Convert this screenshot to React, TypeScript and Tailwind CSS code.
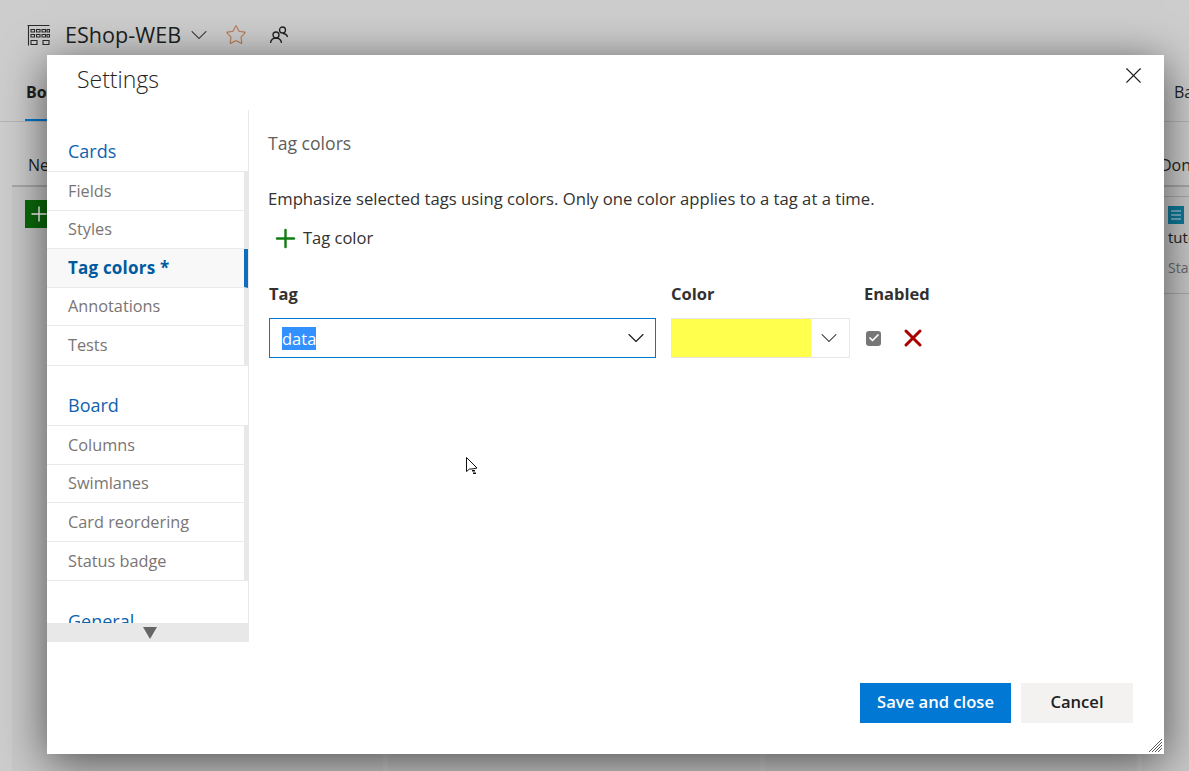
import React from "react";
import { Check, ChevronDown, Plus, Star, X } from "lucide-react";

const CARD_ITEMS = ["Fields", "Styles", "Tag colors *", "Annotations", "Tests"];
const BOARD_ITEMS = ["Columns", "Swimlanes", "Card reordering", "Status badge"];

const FONT = "font-['Open_Sans','Noto_Sans',sans-serif]";

const BoardIcon = () => (
  <svg width="24" height="24" viewBox="0 0 24 24" fill="none" stroke="#2b2b2b" strokeWidth="1.1">
    <path d="M1.500 2.500h22M2.500 2.500v20" />
    <path d="M5 6.500h3.500v2.500H5zM10.500 6.500H14v2.500h-3.500zM16 6.500h3.500v2.500H16zM21 6.500h2.500v2.500H21z" />
    <path d="M5 11.500h3.500V14H5zM10.500 11.500H14V14h-3.500zM16 11.500h3.500V14H16zM21 11.500h2.500V14H21z" />
    <path d="M5 17.500h6v4H5zM17 17.500h6v4h-6z" />
  </svg>
);

const TeamIcon = () => (
  <svg width="20" height="20" viewBox="0 0 20 20" fill="none" stroke="#1f1f1f" strokeWidth="1.3">
    <circle cx="7" cy="10" r="3" />
    <circle cx="13.500" cy="5" r="3" />
    <path d="M1.500 18c.5-3 2.500-5 5.500-5s5 2 5.500 5M14 8.500c2.500.2 4 1.500 4.500 3.500" />
  </svg>
);

const WorkItemIcon = () => (
  <svg width="16" height="18" viewBox="0 0 16 18" className="block">
    <rect width="16" height="18" fill="#0f7a9a" />
    <path d="M3 5h10M3 9h10M3 13h10" stroke="#cfe3ea" strokeWidth="1" />
  </svg>
);

const Cursor = () => (
  <svg width="12" height="18" viewBox="0 0 12 18" className="absolute left-[466px] top-[457px]">
    <path d="M.5.5v14l3-2.500 2.500 0 5-1z" fill="#fff" stroke="#111" strokeWidth="1" />
    <path d="M6 13h3v1.500H6zM7 15.500h3V17H7z" fill="#111" />
  </svg>
);

const ResizeGrip = () => (
  <svg width="13" height="13" viewBox="0 0 13 13" className="absolute bottom-[2px] right-[2px]" stroke="#444" strokeWidth="0.9">
    <path d="M0 13 13 0M3 13 13 3M6 13l7-7M9 13l4-4" />
  </svg>
);

const NavGroup = ({ title, items, active, pad }: { title: string; items: string[]; active?: string; pad: string }) => (
  <div>
    <div className={`${pad} pl-[21px] text-[18px] leading-[24px] text-[#0f62ae]`}>{title}</div>
    <ul className="border-y border-[#eaeaea]">
      {items.map((item) => {
        const isActive = item === active;
        return (
          <li
            key={item}
            className={`flex h-[38.6px] items-center border-r-4 border-b border-b-[#eaeaea] pl-[21px] last:border-b-0 ${
              isActive
                ? "border-r-[#106ebe] bg-[#f8f8f8] text-[17px] font-bold tracking-[0.2px] text-[#005a9e]"
                : "border-r-[#e8e8e8] text-[16.3px] text-[#7a7574]"
            }`}
          >
            {item}
          </li>
        );
      })}
    </ul>
  </div>
);

export default function App() {
  return (
    <div className={`relative h-screen w-full overflow-hidden bg-[#cdcdcd] ${FONT} text-[#201f1e]`}>
      {/* Page behind the dialog */}
      <div className="flex h-[70px] items-center pl-[26px]">
        <BoardIcon />
        <span className="ml-[15px] text-[21.6px]">EShop-WEB</span>
        <ChevronDown size={28} strokeWidth={0.9} className="ml-[4px]" />
        <Star size={22} strokeWidth={1.2} className="ml-[12px] text-[#b87a50]" />
        <span className="ml-[22px]">
          <TeamIcon />
        </span>
      </div>
      <div className="flex h-[52px] items-start justify-between border-b border-[#b5b5b5] pl-[25px]">
        <span className="h-[51px] border-b-2 border-[#0078d4] pl-[1px] pt-[10px] text-[16px] font-bold leading-[24px]">Board</span>
        <span className="w-[15px] overflow-hidden pt-[10px] text-[16px] leading-[24px]">Backlog</span>
      </div>
      <div className="flex h-[63px] items-center justify-between pl-[28px] pt-[22px]">
        <span className="text-[16px]">New</span>
        <span className="w-[29px] overflow-hidden text-[16px]">Done</span>
      </div>
      <div className="ml-[12px] flex h-[600px] gap-[5px] border-t-2 border-[#a8a8a8]">
        <div className="w-[371px] shrink-0 bg-[#c8c8c8] pl-[13px] pt-[13px]">
          <div className="flex h-[28px] w-[34px] items-center justify-center bg-[#0b6a0b] pr-[6px] text-white">
            <Plus size={24} strokeWidth={1.5} />
          </div>
        </div>
        <div className="w-[372px] shrink-0 bg-[#c8c8c8]" />
        <div className="w-[372px] shrink-0 bg-[#c8c8c8]" />
        <div className="min-w-0 flex-1 overflow-hidden bg-[#c8c8c8] pt-[9px]">
          <div className="h-[98px] border-y border-[#a8a8a8] pl-[26px] pt-[9px]">
            <WorkItemIcon />
            <div className="mt-[3px] text-[15px] leading-[21px]">tutorial</div>
            <div className="mt-[9px] text-[14px] text-[#6b6b6b]">State</div>
          </div>
        </div>
      </div>

      {/* Settings dialog */}
      <div className="absolute left-[47px] top-[55px] h-[699px] w-[1117px] bg-white shadow-[0_8px_42px_rgba(0,0,0,0.6)]">
        <div className="flex h-[55px] items-center justify-between pl-[30px] pr-[17px]">
          <span className="-mt-[6px] text-[23px] font-light text-[#252423]">Settings</span>
          <X size={27} strokeWidth={1} className="-mt-[15px]" />
        </div>

        <div className="flex h-[532px]">
          <div className="relative w-[202px] overflow-hidden border-r border-[#eaeaea]">
            <NavGroup title="Cards" items={CARD_ITEMS} active="Tag colors *" pad="pt-[29px] pb-[8px]" />
            <NavGroup title="Board" items={BOARD_ITEMS} pad="pt-[27px] pb-[8px]" />
            <div className="pl-[21px] pt-[28px] text-[18px] leading-[24px] text-[#0f62ae]">General</div>
            <div className="absolute inset-x-0 bottom-0 flex h-[19px] items-center justify-center bg-[#e8e8e8] pl-[4px]">
              <div className="h-0 w-0 border-x-[7px] border-t-[12px] border-x-transparent border-t-[#666666]" />
            </div>
          </div>

          <div className="flex-1 pl-[19px]">
            <div className="pt-[20px] text-[17.6px] leading-[26px] text-[#605e5c]">Tag colors</div>
            <p className="mt-[31px] text-[16.66px] leading-[24px] text-[#323130]">
              Emphasize selected tags using colors. Only one color applies to a tag at a time.
            </p>
            <div className="ml-[3px] mt-[13px] flex items-center gap-[3px] text-[16.5px] text-[#323130]">
              <Plus size={29} strokeWidth={2} className="text-[#107c10]" />
              Tag color
            </div>
            <div className="mt-[29px] flex">
              <div className="ml-[1px] w-[402px]">
                <div className="text-[16.5px] font-bold leading-[24px] text-[#323130]">Tag</div>
                <div className="mt-[12px] flex h-[40px] w-[387px] items-center justify-between border border-[#0078d4] pl-[12px] pr-[5px] text-[16.5px]">
                  <span className="bg-[#3390ff] leading-[23px] text-white">data</span>
                  <ChevronDown size={28} strokeWidth={1} />
                </div>
              </div>
              <div className="w-[193px]">
                <div className="text-[16.5px] font-bold leading-[24px] text-[#323130]">Color</div>
                <div className="mt-[12px] flex h-[40px] w-[179px] border border-[#e6e6e6]">
                  <div className="w-[139px] bg-[#ffff4d]" />
                  <div className="flex flex-1 items-center justify-center pr-[2px]">
                    <ChevronDown size={28} strokeWidth={0.9} />
                  </div>
                </div>
              </div>
              <div>
                <div className="text-[16.5px] font-bold leading-[24px] text-[#323130]">Enabled</div>
                <div className="mt-[12px] flex h-[40px] items-center pl-[2px]">
                  <div className="flex h-[15px] w-[15px] items-center justify-center rounded-[3px] bg-[#767676] text-white">
                    <Check size={12} strokeWidth={3.5} />
                  </div>
                  <X size={28} strokeWidth={2.6} className="ml-[18px] text-[#a80000]" />
                </div>
              </div>
            </div>
          </div>
        </div>

        <div className="flex justify-end gap-[10px] pr-[31px] pt-[41px]">
          <button className="h-[40px] w-[151px] bg-[#0078d4] pb-[2px] text-[16.6px] font-semibold text-white">Save and close</button>
          <button className="h-[40px] w-[112px] bg-[#f3f2f1] pb-[2px] text-[16.6px] font-semibold text-[#201f1e]">Cancel</button>
        </div>
        <ResizeGrip />
      </div>

      <Cursor />
    </div>
  );
}
